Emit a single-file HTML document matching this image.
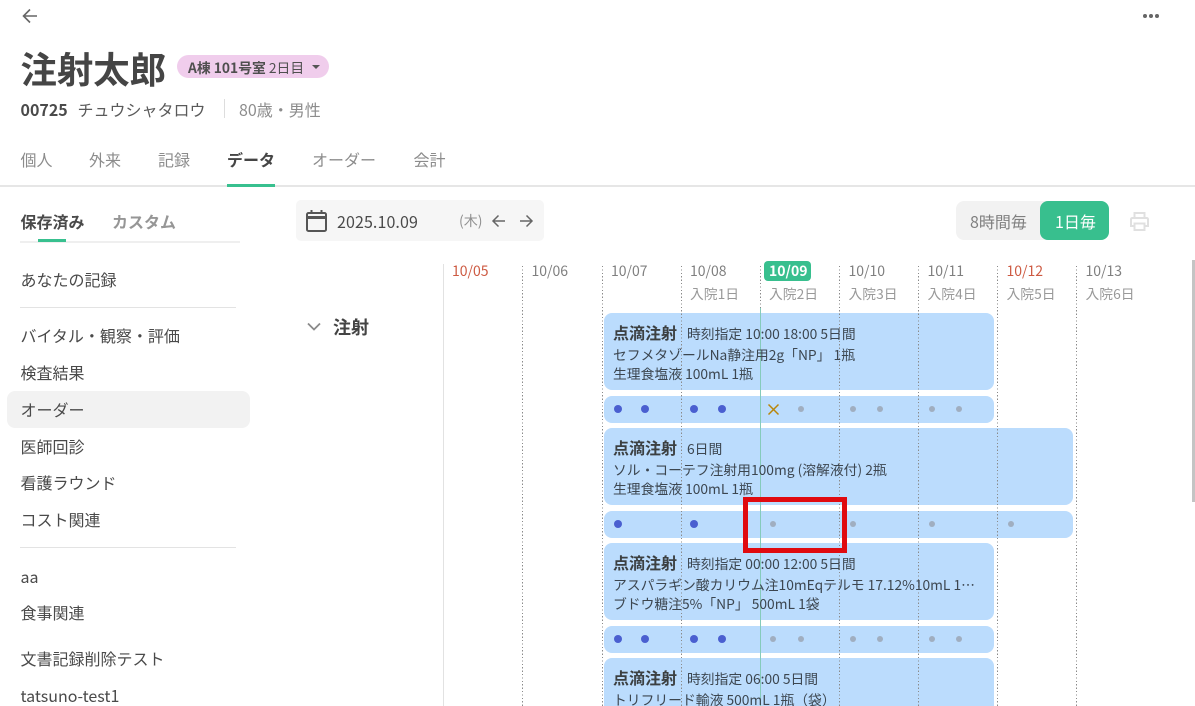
<!DOCTYPE html>
<html lang="ja"><head><meta charset="utf-8"><style>
html,body{margin:0;padding:0;background:#fff;width:1195px;height:706px;overflow:hidden}
#r{width:1195px;height:706px;position:relative;overflow:hidden;font-family:"Noto Sans CJK JP","Liberation Sans",sans-serif;color:#4a4a4a;filter:blur(.3px)}
.t{position:absolute;white-space:nowrap;line-height:20px;font-size:16px}
.b{font-weight:700}
.g{color:#8c8c8c}
.m{font-size:14px;color:#7f7f7f}
.s{font-size:13.8px}
.dl{position:absolute;top:266px;height:440px;width:1px;background:repeating-linear-gradient(to bottom,#8a8a8a 0,#8a8a8a 1.2px,transparent 1.2px,transparent 3.4px)}
.c{position:absolute;background:#bbdcfd;border-radius:8px}
.d{position:absolute;border-radius:50%}
.a{width:8px;height:8px;background:#4a5fd0;margin:-4px 0 0 -4px}
.p{width:6px;height:6px;background:#a0aec0;margin:-3px 0 0 -3px}
.x{font-size:13.8px;color:#3c4650;line-height:20px;position:absolute;white-space:nowrap}
.h{font-size:16px;font-weight:700;color:#3c4042;margin-right:10px}
.side{left:20.5px;font-size:16px;color:#4a4a4a}
</style></head><body><div id="r">
<svg style="position:absolute;left:21px;top:7px" width="18" height="18" viewBox="0 0 18 18" fill="none" stroke="#666" stroke-width="1.6"><path d="M16 9H2.5M9 2.5L2.5 9L9 15.5"/></svg>
<div class="d" style="left:1143px;top:14px;width:4px;height:4px;background:#666;box-shadow:6px 0 0 #666,12px 0 0 #666"></div>

<div class="t b" style="left:20.5px;top:45px;font-size:36.4px;line-height:46px;color:#454545">注射太郎</div>
<div style="position:absolute;left:177px;top:55px;width:152px;height:23px;background:#f0cdec;border-radius:12px"></div>
<div class="t" style="left:188px;top:56.5px;font-size:13.8px;color:#4f4f4f"><b>A棟 101号室</b> 2日目</div>
<div style="position:absolute;left:312px;top:65px;border:4px solid transparent;border-top:4px solid #555;border-bottom:0;width:0;height:0"></div>
<div class="t b" style="left:20.5px;top:98.5px;color:#4a4a4a">00725</div>
<div class="t" style="left:77.5px;top:98.5px;color:#5a5a5a">チュウシャタロウ</div>
<div style="position:absolute;left:224px;top:99px;width:1px;height:19px;background:#ddd"></div>
<div class="t g" style="left:239px;top:98.5px">80歳・男性</div>

<div class="t g" style="left:20.5px;top:148.5px">個人</div>
<div class="t g" style="left:89px;top:148.5px">外来</div>
<div class="t g" style="left:158px;top:148.5px">記録</div>
<div class="t b" style="left:227px;top:148.5px;color:#454545">データ</div>
<div class="t g" style="left:312px;top:148.5px">オーダー</div>
<div class="t g" style="left:413.5px;top:148.5px">会計</div>
<div style="position:absolute;left:0;top:185px;width:1195px;height:2px;background:#e6e6e6"></div>
<div style="position:absolute;left:227px;top:184px;width:48px;height:3px;background:#38c08f"></div>

<div class="t b" style="left:20.5px;top:211px;color:#4a4a4a">保存済み</div>
<div class="t b" style="left:112px;top:211px;color:#969696">カスタム</div>
<div style="position:absolute;left:20px;top:241px;width:220px;height:2px;background:#efefef"></div>
<div style="position:absolute;left:38px;top:239px;width:28px;height:3px;background:#38c08f"></div>

<div class="t side" style="top:269px">あなたの記録</div>
<div style="position:absolute;left:20px;top:307px;width:216px;height:1px;background:#e3e3e3"></div>
<div class="t side" style="top:325px">バイタル・観察・評価</div>
<div class="t side" style="top:362px">検査結果</div>
<div style="position:absolute;left:7px;top:391px;width:243px;height:37px;background:#f2f2f2;border-radius:8px"></div>
<div class="t side" style="top:399px">オーダー</div>
<div class="t side" style="top:435.5px">医師回診</div>
<div class="t side" style="top:472px">看護ラウンド</div>
<div class="t side" style="top:509px">コスト関連</div>
<div style="position:absolute;left:20px;top:547px;width:216px;height:1px;background:#e3e3e3"></div>
<div class="t side" style="top:566px">aa</div>
<div class="t side" style="top:602px">食事関連</div>
<div class="t side" style="top:648px">文書記録削除テスト</div>
<div class="t side" style="top:685px">tatsuno-test1</div>

<div style="position:absolute;left:296px;top:200px;width:248px;height:41px;background:#f6f6f6;border-radius:5px"></div>
<svg style="position:absolute;left:305px;top:209px" width="23" height="24" viewBox="0 0 23 24" fill="none" stroke="#555" stroke-width="2"><rect x="2" y="4" width="19" height="18" rx="1.5"/><path d="M2 8.5H21" stroke-width="3"/><path d="M6.5 1V4M16.5 1V4" stroke-width="2"/></svg>
<div class="t" style="left:337px;top:211px;color:#4a4a4a;letter-spacing:.1px">2025.10.09</div>
<div class="t m" style="left:459px;top:211px;color:#8f8f8f">(木)</div>
<svg style="position:absolute;left:491px;top:213px" width="16" height="16" viewBox="0 0 16 16" fill="none" stroke="#666" stroke-width="1.5"><path d="M14 8H2M7.5 2.5L2 8L7.5 13.5"/></svg>
<svg style="position:absolute;left:518px;top:213px" width="16" height="16" viewBox="0 0 16 16" fill="none" stroke="#666" stroke-width="1.5"><path d="M2 8H14M8.5 2.5L14 8L8.5 13.5"/></svg>

<div style="position:absolute;left:956px;top:201px;width:100px;height:39px;background:#f2f2f2;border-radius:8px"></div>
<div style="position:absolute;left:1040px;top:201px;width:69px;height:39px;background:#38bf8e;border-radius:8px"></div>
<div class="t" style="left:970px;top:211px;color:#7f7f7f">8時間毎</div>
<div class="t" style="left:1055px;top:211px;color:#fff">1日毎</div>
<svg style="position:absolute;left:1129px;top:211px" width="21" height="21" viewBox="0 0 21 21" fill="none" stroke="#e0e0e0" stroke-width="2"><path d="M5.5 7V2H15.5V7"/><path d="M5 15H2V8.5Q2 7 3.5 7H17.5Q19 7 19 8.5V15H16"/><rect x="5.5" y="12.5" width="10" height="6.5"/></svg>
<div style="position:absolute;left:1192px;top:260px;width:3px;height:242px;background:#c4c4c4"></div>

<div style="position:absolute;left:443px;top:264px;width:1px;height:442px;background:#e2e2e2"></div>
<svg style="position:absolute;left:306px;top:321px" width="16" height="12" viewBox="0 0 16 12" fill="none" stroke="#8a8a8a" stroke-width="1.8"><path d="M2 2.5L8 8.5L14 2.5"/></svg>
<div class="t b" style="left:333px;top:317px;font-size:18px;color:#444">注射</div>

<div class="t m" style="left:452px;top:261px;color:#cd5a42">10/05</div>
<div class="t m" style="left:531.5px;top:261px">10/06</div>
<div class="t m" style="left:611px;top:261px">10/07</div>
<div class="t m" style="left:690px;top:261px">10/08</div>
<div class="t m s" style="left:690px;top:282.5px;color:#999">入院1日</div>
<div style="position:absolute;left:764px;top:261px;width:47px;height:20px;background:#38bf8e;border-radius:4px"></div>
<div class="t b" style="left:769px;top:261px;font-size:14px;color:#fff">10/09</div>
<div class="t m s" style="left:769px;top:282.5px;color:#999">入院2日</div>
<div class="t m" style="left:848.5px;top:261px">10/10</div>
<div class="t m s" style="left:848.5px;top:282.5px;color:#999">入院3日</div>
<div class="t m" style="left:927.5px;top:261px">10/11</div>
<div class="t m s" style="left:927.5px;top:282.5px;color:#999">入院4日</div>
<div class="t m" style="left:1006.5px;top:261px;color:#cd5a42">10/12</div>
<div class="t m s" style="left:1006.5px;top:282.5px;color:#999">入院5日</div>
<div class="t m" style="left:1085.5px;top:261px">10/13</div>
<div class="t m s" style="left:1085.5px;top:282.5px;color:#999">入院6日</div>

<div class="c" style="left:604px;top:313px;width:390px;height:77px"></div>
<div class="c" style="left:604px;top:396px;width:390px;height:27px"></div>
<div class="c" style="left:604px;top:428px;width:469px;height:77px"></div>
<div class="c" style="left:604px;top:511px;width:469px;height:27px"></div>
<div class="c" style="left:604px;top:543px;width:390px;height:77px"></div>
<div class="c" style="left:604px;top:625.5px;width:390px;height:27px"></div>
<div class="c" style="left:604px;top:657.5px;width:390px;height:60px"></div>

<div class="dl" style="left:522px"></div>
<div class="dl" style="left:601.5px"></div>
<div class="dl" style="left:680.5px"></div>
<div class="dl" style="left:759.5px;height:42px"></div>
<div class="dl" style="left:838.5px"></div>
<div class="dl" style="left:917.5px"></div>
<div class="dl" style="left:996.5px"></div>
<div class="dl" style="left:1075.5px"></div>
<div style="position:absolute;left:759.5px;top:308px;width:1.5px;height:398px;background:#85cbbb"></div>

<div class="x" style="left:613px;top:321.5px"><span class="h">点滴注射</span>時刻指定 10:00 18:00 5日間</div>
<div class="x" style="left:613px;top:344px">セフメタゾールNa静注用2g「NP」 1瓶</div>
<div class="x" style="left:613px;top:363px">生理食塩液 100mL 1瓶</div>
<div class="x" style="left:613px;top:436.5px"><span class="h">点滴注射</span>6日間</div>
<div class="x" style="left:613px;top:459px">ソル・コーテフ注射用100mg (溶解液付) 2瓶</div>
<div class="x" style="left:613px;top:478px">生理食塩液 100mL 1瓶</div>
<div class="x" style="left:613px;top:551.5px"><span class="h">点滴注射</span>時刻指定 00:00 12:00 5日間</div>
<div class="x" style="left:613px;top:574px">アスパラギン酸カリウム注10mEqテルモ 17.12%10mL 1…</div>
<div class="x" style="left:613px;top:593px">ブドウ糖注5%「NP」 500mL 1袋</div>
<div class="x" style="left:613px;top:666.5px"><span class="h">点滴注射</span>時刻指定 06:00 5日間</div>
<div class="x" style="left:613px;top:689px">トリフリード輸液 500mL 1瓶（袋）</div>

<div class="d a" style="left:618px;top:409px"></div><div class="d a" style="left:645px;top:409px"></div><div class="d a" style="left:694px;top:409px"></div><div class="d a" style="left:722px;top:409px"></div>
<svg style="position:absolute;left:767px;top:403px" width="13" height="13" viewBox="0 0 13 13" fill="none" stroke="#b8860b" stroke-width="1.5"><path d="M1.5 1.5L11.5 11.5M11.5 1.5L1.5 11.5"/></svg>
<div class="d p" style="left:801px;top:409px"></div><div class="d p" style="left:853px;top:409px"></div><div class="d p" style="left:880px;top:409px"></div><div class="d p" style="left:932px;top:409px"></div><div class="d p" style="left:959px;top:409px"></div>

<div class="d a" style="left:618px;top:524px"></div><div class="d a" style="left:694px;top:524px"></div>
<div class="d p" style="left:773px;top:524px"></div><div class="d p" style="left:853px;top:524px"></div><div class="d p" style="left:932px;top:524px"></div><div class="d p" style="left:1011px;top:524px"></div>

<div class="d a" style="left:618px;top:639px"></div><div class="d a" style="left:645px;top:639px"></div><div class="d a" style="left:694px;top:639px"></div><div class="d a" style="left:722px;top:639px"></div>
<div class="d p" style="left:773px;top:639px"></div><div class="d p" style="left:801px;top:639px"></div><div class="d p" style="left:853px;top:639px"></div><div class="d p" style="left:880px;top:639px"></div><div class="d p" style="left:932px;top:639px"></div><div class="d p" style="left:959px;top:639px"></div>

<div style="position:absolute;left:743px;top:497px;width:94px;height:46px;border:5px solid #e00a0f"></div>
</div></body></html>
